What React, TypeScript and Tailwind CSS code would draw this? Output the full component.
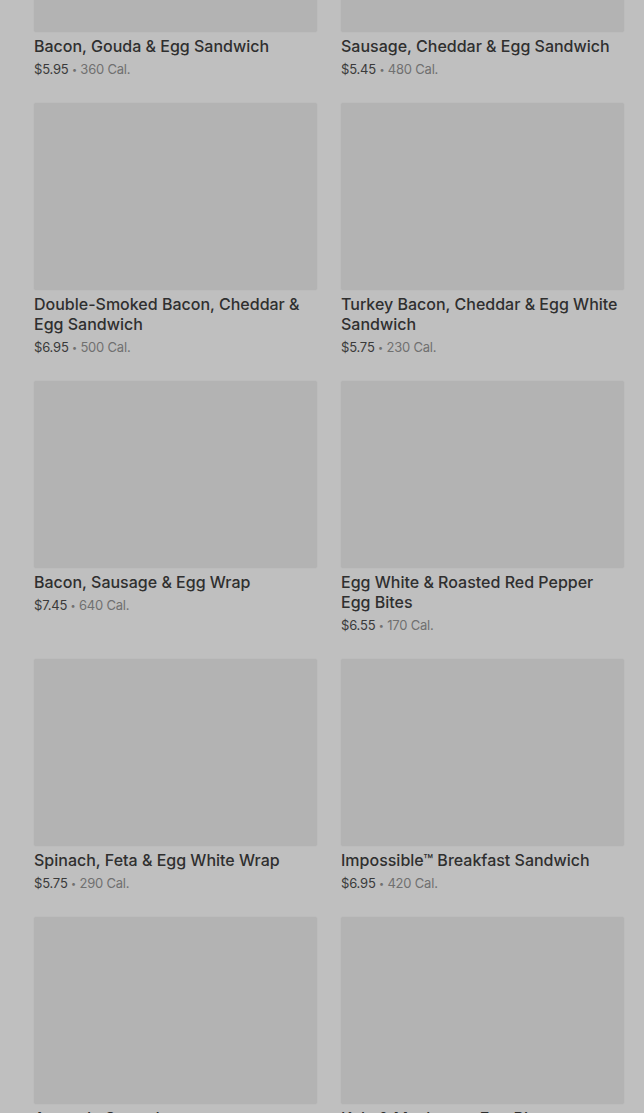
import React from 'react';

const ITEMS = [
  { name: 'Bacon, Gouda & Egg Sandwich', price: '$5.95', cal: '360 Cal.' },
  { name: 'Sausage, Cheddar & Egg Sandwich', price: '$5.45', cal: '480 Cal.' },
  { name: 'Double-Smoked Bacon, Cheddar & Egg Sandwich', price: '$6.95', cal: '500 Cal.' },
  { name: 'Turkey Bacon, Cheddar & Egg White Sandwich', price: '$5.75', cal: '230 Cal.' },
  { name: 'Bacon, Sausage & Egg Wrap', price: '$7.45', cal: '640 Cal.' },
  { name: 'Egg White & Roasted Red Pepper Egg Bites', price: '$6.55', cal: '170 Cal.' },
  { name: 'Spinach, Feta & Egg White Wrap', price: '$5.75', cal: '290 Cal.' },
  { name: 'Impossible™ Breakfast Sandwich', price: '$6.95', cal: '420 Cal.' },
  { name: 'Avocado Spread', price: '$1.25', cal: '90 Cal.' },
  { name: 'Kale & Mushroom Egg Bites', price: '$5.45', cal: '230 Cal.' },
];

export default function App() {
  return (
    <div className="h-[1113px] overflow-hidden bg-[#bfbfbf] font-['Inter',sans-serif]">
      {/* menu grid, scrolled so the first row's images are cut off */}
      <div className="-mt-[155px] grid grid-cols-2 gap-x-6 gap-y-[25px] pl-[34px] pr-5">
        {ITEMS.map((item) => (
          <div key={item.name} className="flex flex-col">
            <div className="h-[187px] rounded-[2px] bg-[#b3b3b3] shadow-[0_0_2px_rgba(0,0,0,0.06)]" />
            <h4 className="mt-1 text-[16px] font-medium leading-5 tracking-normal text-[#2f2f2f]">
              {item.name}
            </h4>
            <div className="mt-1 h-[18px] text-[13px] leading-[18px] tracking-[-0.2px] text-[#3a3a3a]">
              {item.price}
              <span className="text-[#707070]">
                {' '}
                <span className="align-[1px] text-[9px] leading-none">•</span> {item.cal}
              </span>
            </div>
          </div>
        ))}
      </div>
    </div>
  );
}
